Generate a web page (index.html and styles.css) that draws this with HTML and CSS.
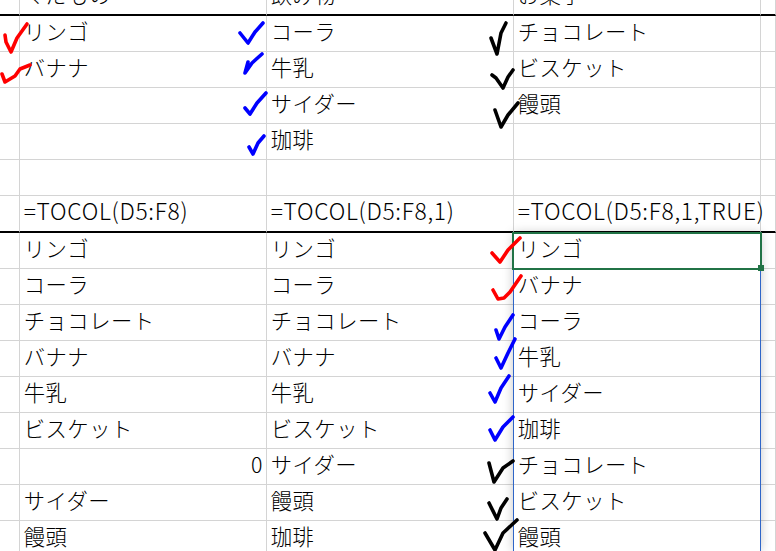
FILE: index.html
```html
<!DOCTYPE html>
<html lang="ja">
<head>
<meta charset="utf-8">
<title>TOCOL</title>
<link rel="stylesheet" href="styles.css">
</head>
<body>
<main class="sheet">
  <div class="c h"></div><div class="c h">くだもの</div><div class="c h">飲み物</div><div class="c h">お菓子</div><div class="c h"></div>
  <div class="c"></div><div class="c">リンゴ</div><div class="c">コーラ</div><div class="c">チョコレート</div><div class="c"></div>
  <div class="c"></div><div class="c">バナナ</div><div class="c">牛乳</div><div class="c">ビスケット</div><div class="c"></div>
  <div class="c"></div><div class="c"></div><div class="c">サイダー</div><div class="c">饅頭</div><div class="c"></div>
  <div class="c"></div><div class="c"></div><div class="c">珈琲</div><div class="c"></div><div class="c"></div>
  <div class="c"></div><div class="c"></div><div class="c"></div><div class="c"></div><div class="c"></div>
  <div class="c h"></div><div class="c h f">=TOCOL(D5:F8)</div><div class="c h f">=TOCOL(D5:F8,1)</div><div class="c h f">=TOCOL(D5:F8,1,TRUE)</div><div class="c h"></div>
  <div class="c"></div><div class="c">リンゴ</div><div class="c">リンゴ</div><div class="c">リンゴ</div><div class="c"></div>
  <div class="c"></div><div class="c">コーラ</div><div class="c">コーラ</div><div class="c">バナナ</div><div class="c"></div>
  <div class="c"></div><div class="c">チョコレート</div><div class="c">チョコレート</div><div class="c">コーラ</div><div class="c"></div>
  <div class="c"></div><div class="c">バナナ</div><div class="c">バナナ</div><div class="c">牛乳</div><div class="c"></div>
  <div class="c"></div><div class="c">牛乳</div><div class="c">牛乳</div><div class="c">サイダー</div><div class="c"></div>
  <div class="c"></div><div class="c">ビスケット</div><div class="c">ビスケット</div><div class="c">珈琲</div><div class="c"></div>
  <div class="c"></div><div class="c num">0</div><div class="c">サイダー</div><div class="c">チョコレート</div><div class="c"></div>
  <div class="c"></div><div class="c">サイダー</div><div class="c">饅頭</div><div class="c">ビスケット</div><div class="c"></div>
  <div class="c"></div><div class="c">饅頭</div><div class="c">珈琲</div><div class="c">饅頭</div><div class="c"></div>
</main>
<div class="spill"></div>
<div class="selected"><span class="handle"></span></div>
<svg class="marks" viewBox="0 0 776 551" aria-hidden="true">
  <g class="red">
    <polyline points="5,35 6,42 11,52 17,38 27,24"/>
    <polyline points="2,74 5,82 15,76 20,69 30,65"/>
    <polyline points="492,253 500,262 508,250 520,238"/>
    <polyline points="493,290 498,299 504,298 510,292 521,276"/>
  </g>
  <g class="blue">
    <polyline points="240,33 244,38 248,43 255,32 263,23"/>
    <polyline points="248,62 245,73 252,63 262,54"/>
    <polyline points="245,108 250,114 257,103 266,93"/>
    <polyline points="249,147 253,154 258,143 264,136"/>
    <polyline points="496,330 499,339 505,327 513,315"/>
    <polyline points="496,358 501,368 508,353 515,339"/>
    <polyline points="490,393 495,402 501,388 509,376"/>
    <polyline points="490,430 495,440 503,427 513,417"/>
  </g>
  <g class="black">
    <polyline points="491,38 497,54 501,33 506,23"/>
    <polyline points="492,75 496,78 503,88 508,77 513,70"/>
    <polyline points="495,110 501,127 508,115 518,103"/>
    <polyline points="489,463 494,482 503,468 513,461"/>
    <polyline points="489,503 497,519 501,508 507,499"/>
    <polyline points="485,533 495,550 503,533 517,520"/>
  </g>
</svg>
</body>
</html>
```
FILE: styles.css
```css
html, body {
  margin: 0;
  height: 551px;
  overflow: hidden;
  background: #fff;
}
body {
  position: relative;
  font-family: "Noto Sans CJK JP", "Liberation Sans", sans-serif;
  font-size: 21.33px;
  font-weight: 200;
  color: #000;
}
.sheet {
  display: grid;
  grid-template-columns: 20px 247px 247px 247px 15px;
  grid-template-rows: repeat(6, 36px) 37px repeat(9, 36px);
  margin-top: -20px;
}
.c {
  box-sizing: border-box;
  display: flex;
  align-items: center;
  padding: 0 3px 6px 3.7px;
  border-right: 1px solid #d4d4d4;
  border-bottom: 1px solid #d4d4d4;
  white-space: nowrap;
  line-height: 1;
  letter-spacing: 0.5px;
}
.h {
  border-bottom: 2px solid #000;
}
.f {
  padding-bottom: 4px;
  font-size: 22.8px;
  letter-spacing: 0.7px;
}
.num {
  justify-content: flex-end;
}
.spill {
  position: absolute;
  top: 233px;
  left: 513px;
  width: 246px;
  height: 318px;
  border: solid #2f66c8;
  border-width: 0 1px;
  box-shadow: 0 0 10px rgba(0, 0, 0, 0.22);
}
.selected {
  position: absolute;
  top: 232px;
  left: 512px;
  width: 246px;
  height: 34px;
  border: 2px solid #217346;
}
.handle {
  position: absolute;
  right: -4px;
  bottom: -3px;
  width: 6px;
  height: 6px;
  background: #217346;
}
.marks {
  position: absolute;
  top: 0;
  left: 0;
  width: 776px;
  height: 551px;
  pointer-events: none;
}
.marks polyline {
  fill: none;
  stroke-width: 3.6;
  stroke-linecap: round;
  stroke-linejoin: round;
}
.red polyline { stroke: #ff0000; }
.blue polyline { stroke: #0000ff; }
.black polyline { stroke: #000; }
```
